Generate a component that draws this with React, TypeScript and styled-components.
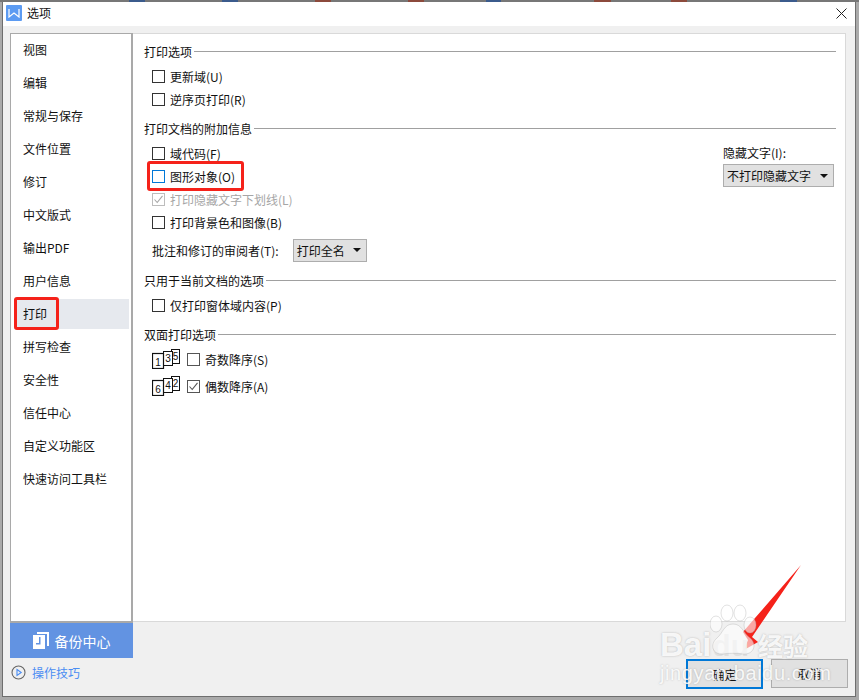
import React from "react";
import styled, { createGlobalStyle } from "styled-components";

const GlobalStyle = createGlobalStyle`
  html, body {
    margin: 0;
    padding: 0;
    background: #aaaaaa;
  }
  * {
    box-sizing: border-box;
  }
`;

const Page = styled.div`
  position: relative;
  width: 859px;
  height: 700px;
  overflow: hidden;
  background-color: #aaaaaa;
  background-image: linear-gradient(
    to right,
    #777 129px,
    #3b5b8c 129px 145px,
    #777 145px 222px,
    #3b5b8c 222px 238px,
    #777 238px 315px,
    #8c4a3c 315px 331px,
    #777 331px 408px,
    #8c4a3c 408px 424px,
    #777 424px 486px,
    #3b5b8c 486px 501px,
    #777 501px 594px,
    #8c4a3c 594px 611px,
    #777 611px 671px,
    #8c4a3c 671px 687px,
    #777 687px 780px,
    #3b5b8c 780px 797px,
    #777 797px
  );
  background-size: 100% 2px;
  background-repeat: no-repeat;
  padding: 2px 3px 3px 2px;
  font-family: "Noto Sans CJK SC", "Liberation Sans", sans-serif;
  font-size: 12px;
  color: #111111;
`;

const Window = styled.div`
  height: 100%;
  display: flex;
  flex-direction: column;
  background: #f0f0f0;
  border: 1px solid #6e6e6e;
  border-top: none;
`;

const TitleBar = styled.div`
  height: 24px;
  flex: none;
  background: #ffffff;
  display: flex;
  align-items: center;
  padding: 0 0 4px 3px;
  gap: 5px;
`;

const AppLogo = styled.div`
  width: 16px;
  height: 16px;
  margin-top: 2px;
  background: #5c9bf2;
  border-radius: 1px;
  display: flex;
  align-items: center;
  justify-content: center;
`;

const CloseButton = styled.div`
  margin-left: auto;
  margin-right: 1px;
  margin-top: 2px;
  width: 26px;
  height: 20px;
  display: flex;
  align-items: center;
  justify-content: center;
`;

const Body = styled.div`
  flex: 1;
  display: flex;
  padding: 7px 9px 0 7px;
  min-height: 0;
`;

const LeftColumn = styled.div`
  width: 123px;
  flex: none;
  display: flex;
  flex-direction: column;
`;

const Sidebar = styled.div`
  height: 590px;
  background: #ffffff;
  border: 1px solid #a9a9a9;
  border-right: 2px solid #a9a9a9;
  border-bottom: 2px solid #a9a9a9;
  padding: 1px 2px 0 3px;
  display: flex;
  flex-direction: column;
  gap: 3px;
`;

const MenuItem = styled.div<{ $active?: boolean }>`
  height: 30px;
  flex: none;
  line-height: 30px;
  padding-left: 9px;
  background: ${(p) => (p.$active ? "#e6e9ee" : "transparent")};
  position: relative;
`;

const Highlight = styled.div`
  position: absolute;
  border: 3px solid #f5221a;
  border-radius: 3px;
`;

const MenuHighlight = styled(Highlight)`
  left: 0;
  top: -2px;
  width: 45px;
  height: 33px;
`;

const BackupButton = styled.div`
  height: 35px;
  flex: none;
  background: #6293e2;
  color: #ffffff;
  font-size: 14px;
  display: flex;
  align-items: center;
  justify-content: center;
  gap: 6px;
`;

const TipsLink = styled.div`
  margin-top: 6px;
  display: flex;
  align-items: center;
  gap: 6px;
  padding-left: 1px;
  color: #4a8df3;
  font-size: 12px;
`;

const RightColumn = styled.div`
  flex: 1;
  min-width: 0;
  display: flex;
  flex-direction: column;
`;

const MainPanel = styled.div`
  height: 589px;
  background: #ffffff;
  border: 1px solid #d9d9d9;
  border-left: none;
  padding: 8px 9px 0 11px;
  position: relative;
`;

const GroupHeader = styled.div<{ $mt?: number }>`
  display: flex;
  align-items: center;
  gap: 2px;
  height: 18px;
  margin-top: ${(p) => p.$mt ?? 0}px;
  &::after {
    content: "";
    flex: 1;
    height: 1px;
    background: #a0a0a0;
  }
`;

const GroupRow = styled.div`
  display: flex;
  justify-content: space-between;
`;

const Rows = styled.div<{ $gap?: number; $mt?: number }>`
  display: flex;
  flex-direction: column;
  gap: ${(p) => p.$gap ?? 5}px;
  margin-top: ${(p) => p.$mt ?? 7}px;
  padding-left: 8px;
`;

const Row = styled.div<{ $disabled?: boolean; $mt?: number }>`
  position: relative;
  height: 18px;
  display: flex;
  align-items: center;
  gap: 5px;
  margin-top: ${(p) => p.$mt ?? 0}px;
  color: ${(p) => (p.$disabled ? "#a6a6a6" : "inherit")};
`;

const CheckBox = styled.span<{ $color?: string }>`
  width: 13px;
  height: 13px;
  flex: none;
  background: #ffffff;
  border: 1px solid ${(p) => p.$color ?? "#333333"};
  display: inline-flex;
  align-items: center;
  justify-content: center;
`;

const RowHighlight = styled(Highlight)`
  left: -5px;
  top: -6px;
  width: 97px;
  height: 30px;
`;

const Select = styled.div<{ $w: number; $ml?: number }>`
  width: ${(p) => p.$w}px;
  height: 23px;
  margin-left: ${(p) => p.$ml ?? 0}px;
  background: #e1e1e1;
  border: 1px solid #adadad;
  display: flex;
  align-items: center;
  justify-content: space-between;
  padding: 0 5px 0 3px;
`;

const Caret = styled.span`
  width: 0;
  height: 0;
  border-left: 4px solid transparent;
  border-right: 4px solid transparent;
  border-top: 4px solid #111111;
`;

const SideField = styled.div`
  display: flex;
  flex-direction: column;
  gap: 3px;
  margin-top: 7px;
  margin-right: 2px;
`;

const Footer = styled.div`
  flex: 1;
  display: flex;
  justify-content: flex-end;
  align-items: flex-start;
  gap: 8px;
  padding-top: 37px;
  margin-right: -2px;
`;

const Button = styled.div<{ $primary?: boolean }>`
  width: 77px;
  height: ${(p) => (p.$primary ? 30 : 29)}px;
  background: #e1e1e1;
  border: ${(p) => (p.$primary ? "2px solid #0078d7" : "1px solid #adadad")};
  display: flex;
  align-items: center;
  justify-content: center;
`;

const PagesIcon = styled.svg`
  flex: none;
  margin-right: 1px;
`;

const Arrow = styled.svg`
  position: absolute;
  left: 0;
  top: 0;
  pointer-events: none;
`;

const Watermark = styled.div`
  position: absolute;
  left: 660px;
  top: 625px;
  width: 170px;
  color: rgba(255, 255, 255, 0.9);
  pointer-events: none;
  font-family: "Liberation Sans", sans-serif;
`;

const Paw = styled.svg`
  position: absolute;
  left: 50px;
  top: -22px;
`;

const WatermarkBrand = styled.div`
  position: relative;
  display: flex;
  align-items: baseline;
  font-size: 33px;
  font-weight: 700;
  line-height: 40px;
  text-shadow: 0 0 2px rgba(120, 120, 120, 0.5);
`;

const BrandInner = styled.span`
  color: rgba(222, 222, 222, 0.95);
  font-size: 30px;
  margin-left: 1px;
  text-shadow: none;
`;

const BrandCn = styled.span`
  font-family: "Noto Sans CJK SC", sans-serif;
  font-size: 25px;
  margin-left: 9px;
`;

const WatermarkUrl = styled.div`
  font-size: 20px;
  line-height: 24px;
  letter-spacing: 0.6px;
  text-shadow: 0 0 2px rgba(120, 120, 120, 0.45);
  margin-top: -5px;
`;

const menu = [
  "视图",
  "编辑",
  "常规与保存",
  "文件位置",
  "修订",
  "中文版式",
  "输出PDF",
  "用户信息",
  "打印",
  "拼写检查",
  "安全性",
  "信任中心",
  "自定义功能区",
  "快速访问工具栏",
];

const Check = ({ color = "#555" }: { color?: string }) => (
  <svg width="11" height="11" viewBox="0 0 11 11">
    <path d="M1.5 5.5 L4.2 8.5 L9.5 1.8" fill="none" stroke={color} strokeWidth="1.1" />
  </svg>
);

const Pages = ({ labels }: { labels: string[] }) => (
  <PagesIcon width="29" height="20" viewBox="0 0 29 20" fontSize="10" fontFamily="Liberation Sans" fill="#111">
    <rect x="19.5" y="0.5" width="8" height="14" fill="#fff" stroke="#111" />
    <rect x="11.5" y="2.5" width="9" height="14" fill="#fff" stroke="#111" />
    <rect x="0.5" y="4.5" width="11" height="15" fill="#fff" stroke="#111" strokeWidth="1.2" />
    <text x="6" y="16.5" textAnchor="middle">{labels[0]}</text>
    <text x="16" y="13" textAnchor="middle">{labels[1]}</text>
    <text x="23.5" y="11" textAnchor="middle">{labels[2]}</text>
  </PagesIcon>
);

export default function App() {
  return (
    <Page>
      <GlobalStyle />
      <Window>
        <TitleBar>
          <AppLogo>
            <svg width="12" height="10" viewBox="0 0 12 10">
              <path d="M1 1 L1 9 L6 5 L11 9 L11 1" fill="none" stroke="#fff" strokeWidth="1.2" />
            </svg>
          </AppLogo>
          选项
          <CloseButton>
            <svg width="11" height="11" viewBox="0 0 11 11">
              <path d="M0.5 0.5 L10.5 10.5 M10.5 0.5 L0.5 10.5" stroke="#222" strokeWidth="1" />
            </svg>
          </CloseButton>
        </TitleBar>
        <Body>
          <LeftColumn>
            <Sidebar>
              {menu.map((item) => (
                <MenuItem key={item} $active={item === "打印"}>
                  {item}
                  {item === "打印" && <MenuHighlight />}
                </MenuItem>
              ))}
            </Sidebar>
            <BackupButton>
              <svg width="16" height="17" viewBox="0 0 16 17">
                <path d="M4 0 H16 V14 H14 V2 H4 Z" fill="#fff" />
                <path d="M0 3 H12 V17 H0 Z M6 5 V11 H3 V12.5 H7.5 V5 Z" fill="#fff" fillRule="evenodd" />
              </svg>
              备份中心
            </BackupButton>
            <TipsLink>
              <svg width="15" height="15" viewBox="0 0 15 15">
                <circle cx="7.5" cy="7.5" r="6.5" fill="none" stroke="#666" strokeWidth="1.1" />
                <path d="M6 4.5 L10.2 7.5 L6 10.5 Z" fill="none" stroke="#4a8df3" strokeWidth="1.1" />
              </svg>
              操作技巧
            </TipsLink>
          </LeftColumn>
          <RightColumn>
            <MainPanel>
              <GroupHeader>打印选项</GroupHeader>
              <Rows>
                <Row><CheckBox />更新域(U)</Row>
                <Row><CheckBox />逆序页打印(R)</Row>
              </Rows>
              <GroupHeader $mt={11}>打印文档的附加信息</GroupHeader>
              <GroupRow>
                <Rows>
                  <Row><CheckBox />域代码(F)</Row>
                  <Row>
                    <CheckBox $color="#0078d7" />图形对象(O)
                    <RowHighlight />
                  </Row>
                  <Row $disabled><CheckBox $color="#bdbdbd"><Check color="#a6a6a6" /></CheckBox>打印隐藏文字下划线(L)</Row>
                  <Row><CheckBox />打印背景色和图像(B)</Row>
                  <Row $mt={5}>
                    批注和修订的审阅者(T):
                    <Select $w={74} $ml={9}>打印全名<Caret /></Select>
                  </Row>
                </Rows>
                <SideField>
                  隐藏文字(I):
                  <Select $w={111}>不打印隐藏文字<Caret /></Select>
                </SideField>
              </GroupRow>
              <GroupHeader $mt={12}>只用于当前文档的选项</GroupHeader>
              <Rows>
                <Row><CheckBox />仅打印窗体域内容(P)</Row>
              </Rows>
              <GroupHeader $mt={11}>双面打印选项</GroupHeader>
              <Rows $gap={9}>
                <Row><Pages labels={["1", "3", "5"]} /><CheckBox $color="#555" />奇数降序(S)</Row>
                <Row><Pages labels={["6", "4", "2"]} /><CheckBox $color="#555"><Check /></CheckBox>偶数降序(A)</Row>
              </Rows>
            </MainPanel>
            <Footer>
              <Button $primary>确定</Button>
              <Button>取消</Button>
            </Footer>
          </RightColumn>
        </Body>
      </Window>
      <Arrow width="859" height="700" viewBox="0 0 859 700">
        <path d="M801 565 L755 618 L743 632 L748 640 L744 650 L758 642 L752 637 Z" fill="#f5221a" />
      </Arrow>
      <Watermark>
        <WatermarkBrand>
          <Paw width="50" height="55" viewBox="0 0 50 55" fill="rgba(255,255,255,0.6)" stroke="rgba(170,170,170,0.35)">
            <ellipse cx="6" cy="21" rx="6" ry="8" />
            <ellipse cx="17" cy="10" rx="6" ry="8" />
            <ellipse cx="30" cy="10" rx="6" ry="8" />
            <ellipse cx="40" cy="22" rx="6" ry="8" />
            <path d="M23 21 C32 21 33 30 40 35 C48 42 43 52 33 51 C27 50 19 50 13 51 C3 52 -1 42 7 35 C13 30 14 21 23 21 Z" />
          </Paw>
          <span>Bai</span>
          <BrandInner>du</BrandInner>
          <BrandCn>经验</BrandCn>
        </WatermarkBrand>
        <WatermarkUrl>jingyan.baidu.com</WatermarkUrl>
      </Watermark>
    </Page>
  );
}
